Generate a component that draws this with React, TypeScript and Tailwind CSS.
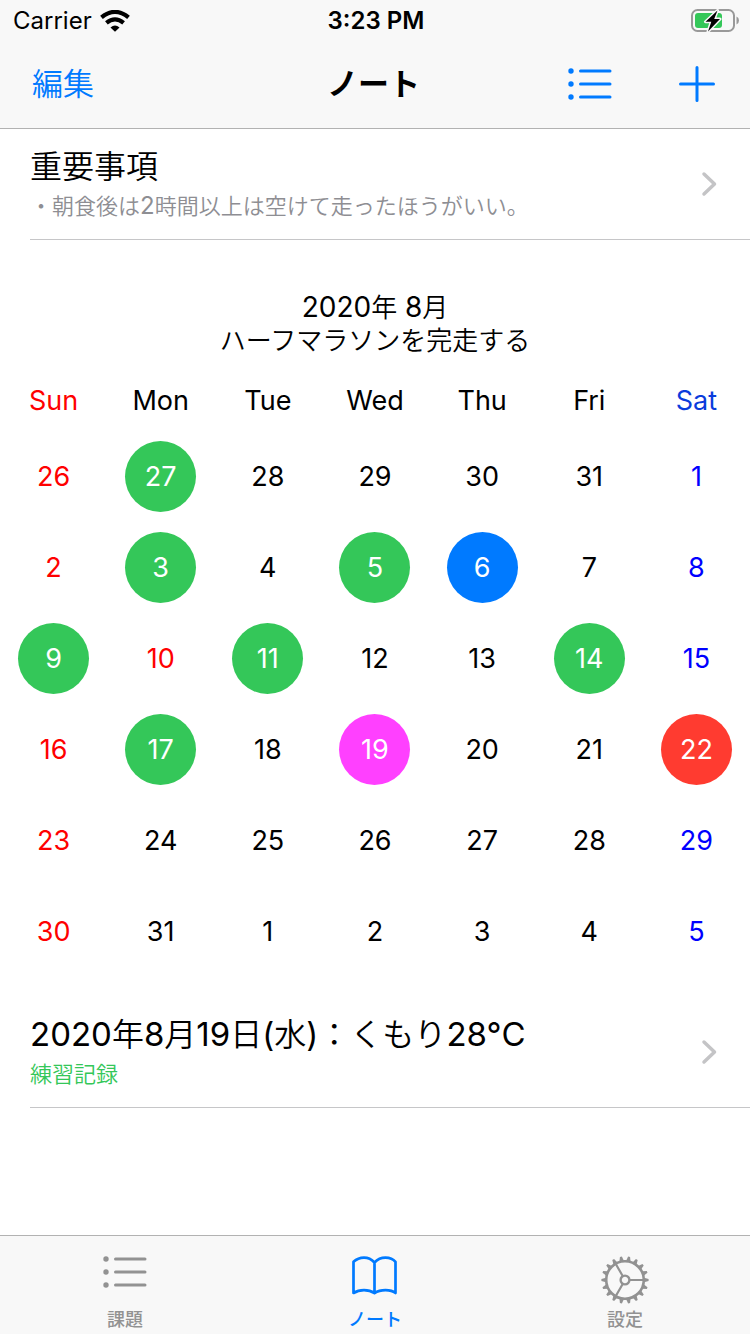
import type { ReactNode } from "react";

type Mark = "green" | "blue" | "pink" | "red";
type Day = { n: number; mark?: Mark; holiday?: boolean };

const markStyles: Record<Mark, string> = {
  green: "bg-[#34c759]",
  blue: "bg-[#007aff]",
  pink: "bg-[#ff40ff]",
  red: "bg-[#ff3b30]",
};

const weekdays = [
  { label: "Sun", color: "text-[#ff0000]" },
  { label: "Mon", color: "text-black" },
  { label: "Tue", color: "text-black" },
  { label: "Wed", color: "text-black" },
  { label: "Thu", color: "text-black" },
  { label: "Fri", color: "text-black" },
  { label: "Sat", color: "text-[#0a3cdc]" },
];

const weeks: Day[][] = [
  [{ n: 26 }, { n: 27, mark: "green" }, { n: 28 }, { n: 29 }, { n: 30 }, { n: 31 }, { n: 1 }],
  [{ n: 2 }, { n: 3, mark: "green" }, { n: 4 }, { n: 5, mark: "green" }, { n: 6, mark: "blue" }, { n: 7 }, { n: 8 }],
  [{ n: 9, mark: "green" }, { n: 10, holiday: true }, { n: 11, mark: "green" }, { n: 12 }, { n: 13 }, { n: 14, mark: "green" }, { n: 15 }],
  [{ n: 16 }, { n: 17, mark: "green" }, { n: 18 }, { n: 19, mark: "pink" }, { n: 20 }, { n: 21 }, { n: 22, mark: "red" }],
  [{ n: 23 }, { n: 24 }, { n: 25 }, { n: 26 }, { n: 27 }, { n: 28 }, { n: 29 }],
  [{ n: 30 }, { n: 31 }, { n: 1 }, { n: 2 }, { n: 3 }, { n: 4 }, { n: 5 }],
];

function dayColor(day: Day, column: number) {
  if (day.mark) return `text-white ${markStyles[day.mark]}`;
  if (column === 0 || day.holiday) return "text-[#ff0000]";
  if (column === 6) return "text-[#0000ff]";
  return "text-black";
}

function WifiIcon() {
  return (
    <svg width="30" height="22" viewBox="0 0 30 22" fill="none" stroke="#000" strokeWidth="4.2" aria-hidden="true">
      <path d="M1.500 7.400Q15-3.600 28.500 7.400" />
      <path d="M6.400 12.900Q15 5.800 23.600 12.900" />
      <path d="M10.500 17.400Q15 13.400 19.500 17.400L15 21.800Z" fill="#000" stroke="none" />
    </svg>
  );
}

function BatteryIcon() {
  return (
    <svg width="48" height="24" viewBox="0 0 48 24" fill="none" role="img" aria-label="Battery charging">
      <rect x="1" y="1" width="42" height="21" rx="5.500" stroke="#999" strokeWidth="2" />
      <path d="M45.500 7.500Q48 8.500 48 11.500T45.500 15.500Z" fill="#999" />
      <rect x="4" y="4" width="27" height="15" rx="3" fill="#34c759" />
      <path d="M26.500 1.500L14.500 12.800H20.300L17 22.500L29 10H23.200Z" fill="#000" stroke="#f8f8f8" strokeWidth="3" strokeLinejoin="round" paintOrder="stroke" />
    </svg>
  );
}

function ListIcon() {
  return (
    <svg width="44" height="32" viewBox="0 0 44 32" fill="none" stroke="currentColor" strokeWidth="3" strokeLinecap="round" aria-hidden="true">
      <path d="M12.500 3H42M12.500 16H42M12.500 29H42" />
      <g fill="currentColor" stroke="none">
        <circle cx="3" cy="3" r="2.700" />
        <circle cx="3" cy="16" r="2.700" />
        <circle cx="3" cy="29" r="2.700" />
      </g>
    </svg>
  );
}

function PlusIcon() {
  return (
    <svg width="36" height="36" viewBox="0 0 36 36" stroke="currentColor" strokeWidth="3" strokeLinecap="round" aria-hidden="true">
      <path d="M18 1.500V34.500M1.500 18H34.500" />
    </svg>
  );
}

function BookIcon() {
  return (
    <svg width="46" height="40" viewBox="0 0 46 40" fill="none" stroke="currentColor" strokeWidth="2.700" strokeLinejoin="round" aria-hidden="true">
      <path d="M22.500 6.500Q18 1.600 12 1.600T1.500 5.800V37Q6 34.200 12 34.200T22.500 37.200Q27 34.200 33.500 34.200T43.500 37V5.800Q40 1.600 33.500 1.600T22.500 6.500V37" />
    </svg>
  );
}

function GearIcon() {
  const teeth = Array.from({ length: 18 }, (_, i) => i * 20);
  return (
    <svg width="48" height="48" viewBox="-24 -24 48 48" fill="none" stroke="currentColor" strokeWidth="2.600" aria-hidden="true">
      <circle r="18.800" />
      <circle r="4.400" strokeWidth="2.400" />
      <path strokeWidth="2.200" d="M4.600 0H18.700M-2.300 -4L-9.350 -16.200M-2.300 4L-9.350 16.200" />
      {teeth.map((angle) => (
        <path key={angle} d="M19 -2.300L23.600 -1V1L19 2.300Z" fill="currentColor" stroke="none" transform={`rotate(${angle})`} />
      ))}
    </svg>
  );
}

function ChevronIcon() {
  return (
    <svg className="shrink-0" width="16" height="26" viewBox="0 0 16 26" fill="none" stroke="#c4c4c6" strokeWidth="3.500" strokeLinecap="round" strokeLinejoin="round" aria-hidden="true">
      <path d="M3 3L13.500 13L3 23" />
    </svg>
  );
}

const latinRun = /([\x20-\x7e°]+)/;

/** Sets the Latin runs of a mixed string a little larger than the Japanese around them. */
function MixedText({ text, latin }: { text: string; latin: string }) {
  return text.split(latinRun).map((part, i) =>
    latinRun.test(part) ? (
      <span key={i} className={`leading-none font-normal ${latin}`}>{part}</span>
    ) : (
      part
    ),
  );
}

function NoteRow({ title, detail, detailColor }: { title: string; detail: string; detailColor: string }) {
  return (
    <a href="#note" className="ml-[30px] flex items-center justify-between border-b border-[#c6c6c8] pt-4 pr-[33px] pb-4">
      <span className="flex flex-col">
        <span className="text-[32px] leading-[44px]">
          <MixedText text={title} latin="text-[33px]" />
        </span>
        <span className={`text-[22px] leading-[34px] ${detailColor}`}>
          <MixedText text={detail} latin="text-[24px]" />
        </span>
      </span>
      <ChevronIcon />
    </a>
  );
}

function Tab({ label, icon, active }: { label: string; icon: ReactNode; active?: boolean }) {
  return (
    <a href="#tab" aria-current={active ? "page" : undefined} className={`flex flex-1 flex-col items-center pt-5 ${active ? "text-[#007aff]" : "text-[#929292]"}`}>
      <span className="flex h-[52px] items-start justify-center">{icon}</span>
      <span className="text-[18px] leading-6 font-medium">{label}</span>
    </a>
  );
}

export default function App() {
  return (
    <div className="flex min-h-screen flex-col bg-white font-[Inter,'Noto_Sans_CJK_JP',sans-serif] font-[350] text-black">
      <header className="border-b border-[#b2b2b2] bg-[#f8f8f8]">
        <div className="grid h-10 grid-cols-3 items-center pt-px pr-[11px] pl-[13px] text-[24px] font-normal">
          <div className="flex items-center gap-2">
            <span>Carrier</span>
            <WifiIcon />
          </div>
          <span className="text-center font-semibold">3:23 PM</span>
          <div className="flex justify-end">
            <BatteryIcon />
          </div>
        </div>
        <nav className="grid h-[88px] grid-cols-3 items-center pr-[35px] pl-8">
          <button type="button" className="justify-self-start text-[31px] text-[#007aff]">編集</button>
          <h1 className="text-center text-[31px] font-bold">ノート</h1>
          <div className="flex items-center justify-end gap-[67px] text-[#007aff]">
            <button type="button" aria-label="List"><ListIcon /></button>
            <button type="button" aria-label="Add"><PlusIcon /></button>
          </div>
        </nav>
      </header>

      <main className="flex-1">
        <NoteRow title="重要事項" detail="・朝食後は2時間以上は空けて走ったほうがいい。" detailColor="text-[#8e8e93]" />

        <section className="pt-[51px] pb-5">
          <h2 className="text-center text-[26px] leading-[33px]">
            <MixedText text="2020年 8月" latin="text-[28px]" />
            <br />
            ハーフマラソンを完走する
          </h2>
          <table className="mt-[14px] w-full table-fixed border-collapse text-center text-[27px] font-normal">
            <thead>
              <tr className="h-[60px]">
                {weekdays.map((day) => (
                  <th key={day.label} scope="col" className={`p-0 font-normal ${day.color}`}>{day.label}</th>
                ))}
              </tr>
            </thead>
            <tbody>
              {weeks.map((week, row) => (
                <tr key={row} className="h-[91px]">
                  {week.map((day, column) => (
                    <td key={column} className="p-0">
                      <button type="button" className={`mx-auto flex size-[71px] items-center justify-center rounded-full pt-px ${dayColor(day, column)}`}>
                        {day.n}
                      </button>
                    </td>
                  ))}
                </tr>
              ))}
            </tbody>
          </table>
        </section>

        <NoteRow title="2020年8月19日(水)：くもり28°C" detail="練習記録" detailColor="text-[#34c759]" />
      </main>

      <footer className="flex h-[99px] border-t border-[#b2b2b2] bg-[#f8f8f8]">
        <Tab label="課題" icon={<ListIcon />} />
        <Tab label="ノート" icon={<BookIcon />} active />
        <Tab label="設定" icon={<GearIcon />} />
      </footer>
    </div>
  );
}
